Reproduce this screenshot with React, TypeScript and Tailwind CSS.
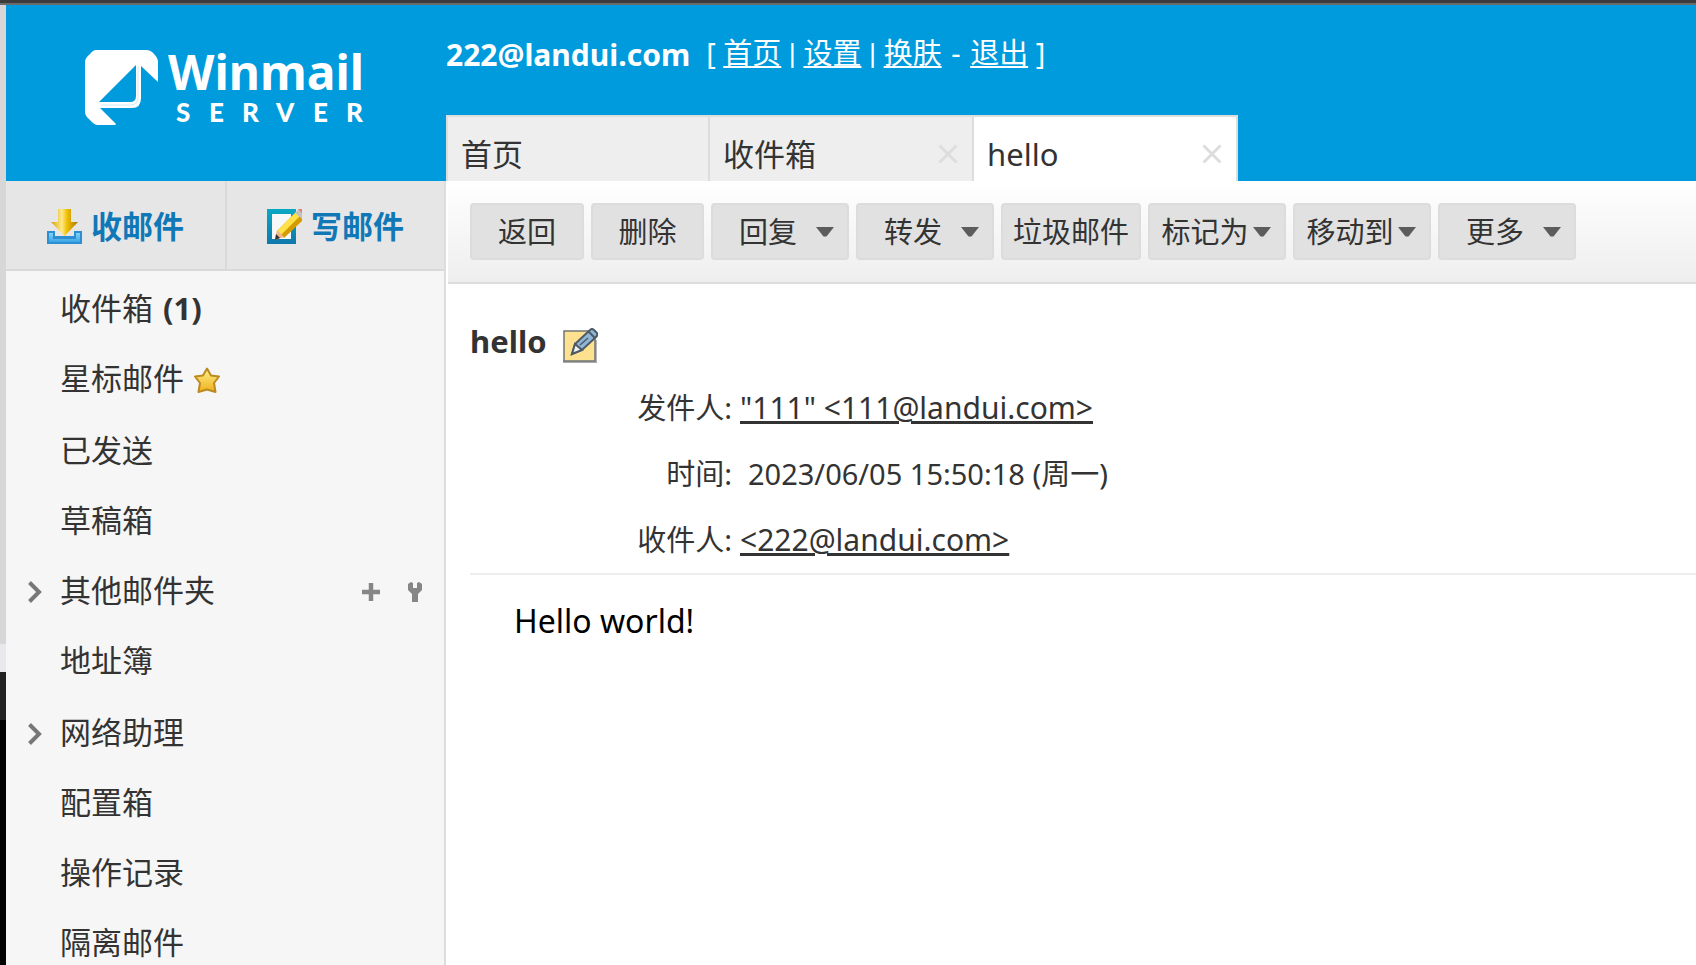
import React, { useState } from 'react';

const FONT = "font-['Noto_Sans','Noto_Sans_CJK_SC',sans-serif]";

const Logo = () => (
  <svg viewBox="0 0 300 90" className="h-[90px] w-[300px] overflow-visible" role="img" aria-label="Winmail Server">
    <path
      fill="#fff"
      fillRule="evenodd"
      d="M11 0H61Q66 0 69 4Q73 8 73 12V32L56 16V48Q56 58 47 58H15L31 74Q31 75 29 75H13Q9 75 5 70Q0 66 0 62V12Q0 8 5 4Q8 0 11 0ZM51 15L14 52H45Q51 52 51 46Z"
    />
    <path d="M53 16V47Q53 55 46 55H16" fill="none" stroke="#009bdd" strokeWidth="1" opacity="0.2" />
    <text x="83" y="40" fill="#fff" fontFamily="Noto Sans" fontWeight="700" fontSize="48">Winmail</text>
    <text y="72" fill="#fff" fontFamily="Lato" fontWeight="900" fontSize="26">
      <tspan x="91">S</tspan>
      <tspan x="124">E</tspan>
      <tspan x="157">R</tspan>
      <tspan x="191">V</tspan>
      <tspan x="228">E</tspan>
      <tspan x="261">R</tspan>
    </text>
  </svg>
);

const ReceiveIcon = () => (
  <svg viewBox="0 0 35 35" className="size-[35px] shrink-0" aria-hidden="true">
    <defs>
      <linearGradient id="arrow" x1="0" x2="1">
        <stop offset="0" stopColor="#d9a300" />
        <stop offset="0.4" stopColor="#ffe98a" />
        <stop offset="0.6" stopColor="#f0be00" />
        <stop offset="1" stopColor="#a87800" />
      </linearGradient>
      <linearGradient id="tray" x1="0" y1="0" x2="0" y2="1">
        <stop offset="0" stopColor="#7fd4fc" />
        <stop offset="1" stopColor="#3ba4e4" />
      </linearGradient>
    </defs>
    <path d="M0 22H8V27H27V22H35V35H0Z" fill="#2d8fd2" />
    <path d="M2 24H6V30H29V24H33V33H2Z" fill="url(#tray)" />
    <path d="M11 0H24V13H31L17.500 27L4 13H11Z" fill="url(#arrow)" />
  </svg>
);

const ComposeIcon = () => (
  <svg viewBox="0 0 35 35" className="size-[35px] shrink-0" aria-hidden="true">
    <defs>
      <linearGradient id="frame" x1="0" y1="0" x2="0" y2="1">
        <stop offset="0" stopColor="#0aa8c4" />
        <stop offset="1" stopColor="#0f78ac" />
      </linearGradient>
    </defs>
    <path d="M0 0H29V35H0Z" fill="url(#frame)" />
    <path d="M5 5H24V30H5Z" fill="#f6f8fa" />
    <path d="M29 3L35 9V12L17 29L10 22Z" fill="#d49c00" />
    <path d="M29 3L33 7L14 26L10 22Z" fill="#ffe14a" />
    <path d="M28 4L32 0H35V10Z" fill="#c4c0bc" />
    <path d="M31 0H35V4Z" fill="#e87a78" />
    <path d="M10 21L17 28L8 31Z" fill="#f3b58c" />
    <path d="M9 25L13 29L8 31Z" fill="#333" />
  </svg>
);

const NoteIcon = () => (
  <svg viewBox="0 0 35 35" className="size-[35px]" aria-hidden="true">
    <path d="M0 32H34V35H0Z" fill="#a9a9a9" />
    <path d="M32 12H34V34H32Z" fill="#b5b5b5" />
    <path d="M1 3H32V33H1Z" fill="#fde18e" stroke="#707578" strokeWidth="1.500" />
    <path d="M27 2Q29 0 31 2L34 5Q35 7 33 9L19 22L9 26L12 16Z" fill="#8fb6d6" stroke="#4d5a66" strokeWidth="2" />
    <path d="M12 16L19 22L9 26Z" fill="#eef2f5" stroke="#4d5a66" strokeWidth="2" />
    <path d="M25 3L32 10" stroke="#4d5a66" strokeWidth="2" />
    <path d="M17 17L25 10" stroke="#4d5a66" strokeWidth="1.500" />
  </svg>
);

const StarIcon = () => (
  <svg viewBox="0 0 26 26" className="mt-1 size-[26px]" aria-hidden="true">
    <defs>
      <linearGradient id="star" x1="0" y1="0" x2="0" y2="1">
        <stop offset="0" stopColor="#fff08a" />
        <stop offset="1" stopColor="#eeb01c" />
      </linearGradient>
    </defs>
    <path
      d="M13 1.500L17 8.500L25 9.500L20 16L21.500 25L13 22.500L4.500 25L6 16L1 9.500L9 8.500Z"
      fill="url(#star)"
      stroke="#bd8a22"
      strokeWidth="2"
      strokeLinejoin="round"
    />
  </svg>
);

const ChevronIcon = () => (
  <svg viewBox="0 0 14 22" className="h-[22px] w-[14px]" aria-hidden="true">
    <path d="M1.500 1.500L11 11L1.500 20.500" fill="none" stroke="#777" strokeWidth="4" />
  </svg>
);

const PlusIcon = () => (
  <svg viewBox="0 0 18 18" className="size-[18px]" aria-hidden="true">
    <path d="M9 0V18M0 9H18" stroke="#868686" strokeWidth="4.500" />
  </svg>
);

const WrenchIcon = () => (
  <svg viewBox="0 0 14 20" className="h-5 w-3.5" aria-hidden="true">
    <path d="M0 2L3 0L5 1V6H9V1L11 0L14 2V8L10 12V20H4V12L0 8Z" fill="#868686" />
  </svg>
);

const CloseIcon = () => (
  <svg viewBox="0 0 20 20" className="size-5" aria-hidden="true">
    <path d="M1.500 1.500L18.500 18.500M18.500 1.500L1.500 18.500" stroke="#ddd" strokeWidth="3" />
  </svg>
);

const Caret = () => (
  <svg viewBox="0 0 18 10" className="h-2.5 w-[18px]" aria-hidden="true">
    <path d="M0 0H18L10.500 9.500H7.500Z" fill="#5c5c5c" />
  </svg>
);

interface Folder {
  name: string;
  unread?: number;
  starred?: boolean;
  expandable?: boolean;
  manage?: boolean;
}

const folderGroups: Folder[][] = [
  [{ name: '收件箱', unread: 1 }, { name: '星标邮件', starred: true }],
  [{ name: '已发送' }, { name: '草稿箱' }, { name: '其他邮件夹', expandable: true, manage: true }, { name: '地址簿' }],
  [{ name: '网络助理', expandable: true }, { name: '配置箱' }, { name: '操作记录' }, { name: '隔离邮件' }],
];

const tabs = [
  { id: 'home', title: '首页', closable: false },
  { id: 'inbox', title: '收件箱', closable: true },
  { id: 'hello', title: 'hello', closable: true },
];

const actions = [
  { label: '返回', width: 'w-[114px]', menu: false },
  { label: '删除', width: 'w-[113px]', menu: false },
  { label: '回复', width: 'w-[138px]', menu: true },
  { label: '转发', width: 'w-[138px]', menu: true },
  { label: '垃圾邮件', width: 'w-[140px]', menu: false },
  { label: '标记为', width: 'w-[138px]', menu: true },
  { label: '移动到', width: 'w-[138px]', menu: true },
  { label: '更多', width: 'w-[138px]', menu: true },
];

const Pipe = () => <span className="font-['Roboto',sans-serif]">|</span>;

const FolderRow = ({ folder }: { folder: Folder }) => (
  <li className="flex h-[70px] items-center pr-[22px]">
    <span className="flex w-[54px] pt-1 pl-[22px]">
      {folder.expandable && (
        <button type="button" aria-label="展开">
          <ChevronIcon />
        </button>
      )}
    </span>
    <a href="#" className="flex items-center gap-2.5">
      <span>{folder.name}</span>
      {folder.unread && <b>({folder.unread})</b>}
      {folder.starred && <StarIcon />}
    </a>
    {folder.manage && (
      <span className="ml-auto flex items-center gap-7 pt-1">
        <button type="button" aria-label="新建"><PlusIcon /></button>
        <button type="button" aria-label="管理"><WrenchIcon /></button>
      </span>
    )}
  </li>
);

const App: React.FC = () => {
  const [activeTab, setActiveTab] = useState('hello');

  return (
    <div className={`flex h-screen flex-col overflow-hidden text-[#333] ${FONT}`}>
      <div className="h-[5px] shrink-0 border-b-2 border-[#6b6b6b] bg-[#3c3c3c]" />
      <div className="flex min-h-0 flex-1">
        {/* Desktop edge behind the window */}
        <div className="flex w-1.5 shrink-0 flex-col bg-black">
          <div className="h-[639px] bg-[#d7d7d7]" />
          <div className="h-7 bg-[#e9e9ed]" />
          <div className="h-12 bg-[#222]" />
        </div>

        <div className="flex min-w-0 flex-1 flex-col bg-white">
          <header className="flex h-44 shrink-0 bg-[#009bdd] text-white">
            <div className="w-[440px] shrink-0 pt-[45px] pl-[79px]">
              <Logo />
            </div>
            <div className="flex flex-1 flex-col justify-between">
              <div className="flex h-[98px] items-center text-[29px] whitespace-pre">
                <b className="text-[30px]">222@landui.com</b>
                <span className="pl-4">
                  {'[ '}<a href="#" className="underline">首页</a>
                  {' '}<Pipe />{' '}<a href="#" className="underline">设置</a>
                  {' '}<Pipe />{' '}<a href="#" className="underline">换肤</a>
                  {' '}<span className="mx-0.5">-</span>{' '}<a href="#" className="underline">退出</a>{' ]'}
                </span>
              </div>
              <nav className="flex self-start text-[31px] text-[#333]">
                {tabs.map((tab) => (
                  <div
                    key={tab.id}
                    className={`flex h-[66px] w-[264px] items-center justify-between border-t-2 border-r-2 border-[#ddd] pt-2.5 pr-3.5 pl-[13px] first:border-l-2 ${
                      tab.id === activeTab ? 'bg-white' : 'bg-[#eee]'
                    }`}
                  >
                    <button type="button" onClick={() => setActiveTab(tab.id)}>{tab.title}</button>
                    {tab.closable && <button type="button" aria-label="关闭"><CloseIcon /></button>}
                  </div>
                ))}
              </nav>
            </div>
          </header>

          <div className="flex min-h-0 flex-1">
            <aside className="w-[440px] shrink-0 overflow-hidden border-r-2 border-[#ddd] bg-[#f6f6f6] text-[31px]">
              <div className="flex h-[90px] border-b-2 border-[#d9d9d9] bg-[#e6e6e6] font-bold text-[#1178b8]">
                <button type="button" className="flex w-[221px] items-center gap-[9px] border-r-2 border-[#d9d9d9] pt-0.5 pl-[41px]">
                  <ReceiveIcon />
                  收邮件
                </button>
                <button type="button" className="flex flex-1 items-center gap-[9px] pt-0.5 pl-10">
                  <ComposeIcon />
                  写邮件
                </button>
              </div>
              <nav className="flex flex-col gap-0.5 pt-0.5">
                {folderGroups.map((group) => (
                  <ul key={group[0].name}>
                    {group.map((folder) => (
                      <FolderRow key={folder.name} folder={folder} />
                    ))}
                  </ul>
                ))}
              </nav>
            </aside>

            <main className="min-w-0 flex-1 pl-0.5 text-[29px]">
              <div className="flex h-[103px] gap-[7px] border-b-2 border-[#ddd] bg-linear-to-b from-white to-[#eee] pt-[22px] pl-[22px]">
                {actions.map((action) => (
                  <button
                    key={action.label}
                    type="button"
                    className={`flex h-[57px] items-center rounded border-2 border-[#dcdcdc] bg-[#e1e1e1] ${action.width} ${
                      action.menu ? 'pr-[13px] pl-[7px]' : ''
                    }`}
                  >
                    <span className="flex-1 whitespace-nowrap">{action.label}</span>
                    {action.menu && <Caret />}
                  </button>
                ))}
              </div>

              <article className="pl-[22px]">
                <div className="flex items-start gap-4 pt-9 pb-3">
                  <h1 className="text-[31px] leading-[42px] font-bold">hello</h1>
                  <button type="button" aria-label="编辑" className="pt-2"><NoteIcon /></button>
                </div>
                <dl className="grid grid-cols-[262px_1fr] gap-x-2 border-b-2 border-[#eee] leading-[66px]">
                  <dt className="text-right">发件人:</dt>
                  <dd><a href="#" className="text-[30px] underline">"111" &lt;111@landui.com&gt;</a></dd>
                  <dt className="text-right">时间:</dt>
                  <dd className="pl-2">2023/06/05 15:50:18 (周一)</dd>
                  <dt className="text-right">收件人:</dt>
                  <dd><a href="#" className="text-[30px] underline">&lt;222@landui.com&gt;</a></dd>
                </dl>
                <p className="pt-[22px] pl-11 text-[32px] text-black">Hello world!</p>
              </article>
            </main>
          </div>
        </div>
      </div>
    </div>
  );
};

export default App;
